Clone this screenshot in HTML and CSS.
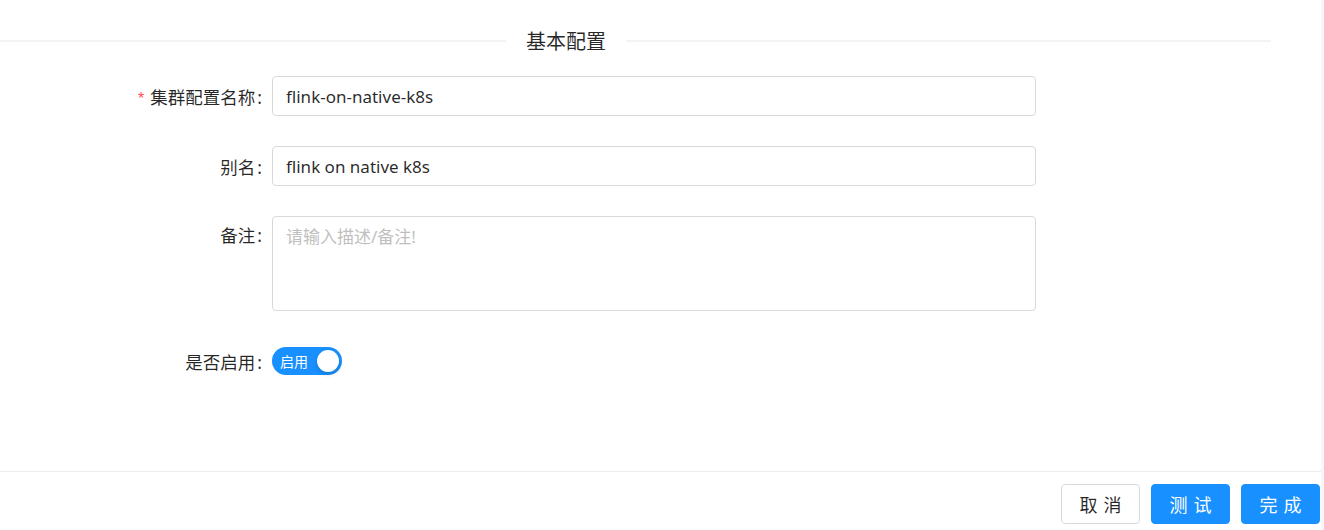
FILE: index.html
```html
<!DOCTYPE html>
<html lang="zh-CN">
<head>
<meta charset="utf-8">
<title>基本配置</title>
<link rel="stylesheet" href="styles.css">
</head>
<body>
<div class="panel">
  <div class="content">
    <div class="divider">
      <span class="line line-left"></span>
      <span class="divider-text">基本配置</span>
      <span class="line line-right"></span>
    </div>
    <form class="form">
      <div class="row">
        <label class="label"><span class="req">*</span>集群配置名称<span class="colon">:</span></label>
        <div class="control"><input class="input" type="text" value="flink-on-native-k8s"></div>
      </div>
      <div class="row">
        <label class="label">别名<span class="colon">:</span></label>
        <div class="control"><input class="input" type="text" value="flink on native k8s"></div>
      </div>
      <div class="row row-top">
        <label class="label">备注<span class="colon">:</span></label>
        <div class="control"><textarea class="textarea" placeholder="请输入描述/备注!"></textarea></div>
      </div>
      <div class="row">
        <label class="label">是否启用<span class="colon">:</span></label>
        <div class="control">
          <button type="button" class="switch"><span class="switch-text">启用</span><span class="knob"></span></button>
        </div>
      </div>
    </form>
  </div>
  <div class="footer">
    <button type="button" class="btn">取消</button>
    <button type="button" class="btn btn-primary">测试</button>
    <button type="button" class="btn btn-primary">完成</button>
  </div>
</div>
</body>
</html>
```

FILE: styles.css
```css
html, body {
  margin: 0;
  padding: 0;
  height: 530px;
  overflow: hidden;
}
body {
  background: #f7f7f7;
  font-family: "Noto Sans", "Noto Sans CJK SC", sans-serif;
  color: rgba(0, 0, 0, 0.85);
}
.panel {
  width: 1321px;
  height: 530px;
  background: #fff;
  display: flex;
  flex-direction: column;
}
.content {
  flex: 1;
  padding-top: 28px;
}
.divider {
  display: flex;
  align-items: flex-start;
  width: 1271px;
  height: 28px;
}
.line {
  height: 2px;
  margin-top: 12px;
  background: #f3f3f3;
}
.line-left { width: 506px; }
.line-right { flex: 1; }
.divider-text {
  padding: 0 20px;
  font-size: 20px;
  line-height: 28px;
  color: rgba(0, 0, 0, 0.85);
}
.form {
  margin-top: 20px;
  display: flex;
  flex-direction: column;
  gap: 30px;
}
.row {
  display: flex;
  align-items: center;
  min-height: 40px;
}
.row-top { align-items: flex-start; }
.row-top .label { line-height: 40px; margin-top: -1px; }
.label {
  width: 272px;
  padding-right: 10px;
  box-sizing: border-box;
  text-align: right;
  font-size: 17.5px;
  color: rgba(0, 0, 0, 0.85);
  white-space: nowrap;
}
.req {
  color: #ff4d4f;
  margin-right: 6px;
  font-family: "Liberation Sans", sans-serif;
  font-size: 16px;
}
.colon {
  margin-left: 2px;
}
.control {
  width: 764px;
}
.input, .textarea {
  box-sizing: border-box;
  width: 764px;
  border: 1px solid #d9d9d9;
  border-radius: 4px;
  font-family: "Noto Sans", "Noto Sans CJK SC", sans-serif;
  font-size: 17px;
  color: rgba(0, 0, 0, 0.85);
  background: #fff;
  outline: none;
}
.input {
  height: 40px;
  padding: 0 13px;
}
.textarea {
  display: block;
  height: 95px;
  padding: 8px 13px;
  resize: none;
  line-height: 24px;
}
.textarea::placeholder {
  color: #bfbfbf;
}
.switch {
  position: relative;
  width: 70px;
  height: 28px;
  border: 0;
  border-radius: 14px;
  background: #1890ff;
  padding: 0 0 0 8px;
  display: flex;
  align-items: center;
  cursor: pointer;
}
.switch-text {
  color: #fff;
  font-family: "Noto Sans CJK SC", sans-serif;
  font-size: 14px;
  line-height: 28px;
}
.knob {
  position: absolute;
  right: 3px;
  top: 3px;
  width: 22px;
  height: 22px;
  border-radius: 50%;
  background: #fff;
  box-shadow: 0 2px 4px rgba(0, 35, 11, 0.2);
}
.footer {
  border-top: 1px solid #ececec;
  display: flex;
  justify-content: flex-end;
  align-items: flex-start;
  gap: 11px;
  padding-top: 12px;
  padding-right: 1px;
  box-sizing: border-box;
  height: 59px;
}
.btn {
  width: 79px;
  height: 40px;
  border: 1px solid #d9d9d9;
  border-radius: 4px;
  background: #fff;
  color: rgba(0, 0, 0, 0.85);
  font-family: "Noto Sans CJK SC", sans-serif;
  font-size: 18px;
  letter-spacing: 0.34em;
  text-indent: 0.34em;
  padding: 0;
  cursor: pointer;
}
.btn-primary {
  background: #1890ff;
  border-color: #1890ff;
  color: #fff;
}
```
